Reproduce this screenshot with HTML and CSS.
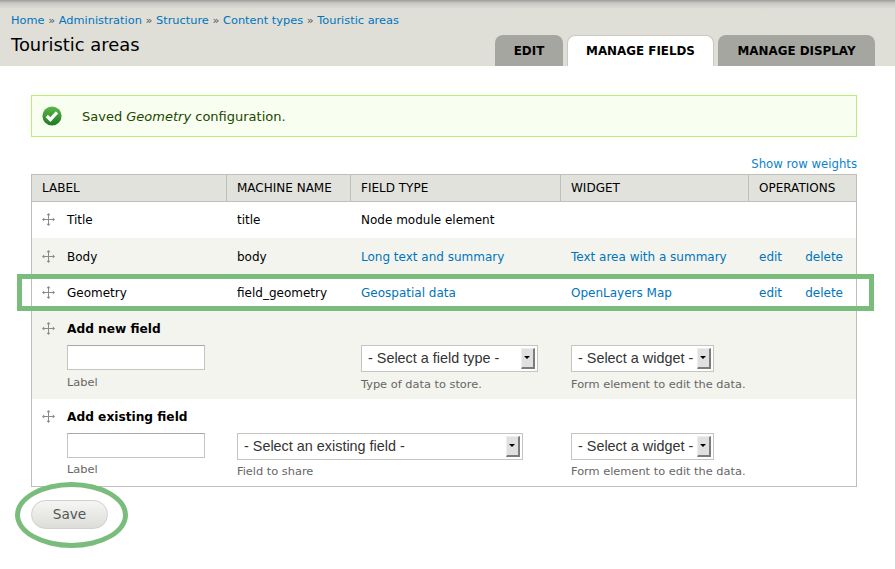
FILE: index.html
```html
<!DOCTYPE html>
<html>
<head>
  <meta charset="utf-8"/>
  <title>Touristic areas</title>
  <link rel="stylesheet" href="styles.css">
</head>
<body>
  <svg width="0" height="0" class="defs">
    <symbol id="handle" viewBox="0 0 13 13">
      <path d="M6.5 1v11M1 6.5h11" stroke="#8a8a86" stroke-width="1" fill="none"/>
      <path d="M6.5 0l2 2.2h-4zM6.5 13l2-2.2h-4zM0 6.5l2.2-2v4zM13 6.5l-2.2-2v4z" fill="#8a8a86"/>
    </symbol>
  </svg>

  <header class="header">
    <div class="breadcrumb">
      <a href="#">Home</a> » <a href="#">Administration</a> » <a href="#">Structure</a> » <a href="#">Content types</a> » <a href="#">Touristic areas</a>
    </div>
    <div class="header-row">
      <h1>Touristic areas</h1>
      <ul class="tabs">
        <li class="tab tab-edit">EDIT</li>
        <li class="tab tab-active">MANAGE FIELDS</li>
        <li class="tab tab-display">MANAGE DISPLAY</li>
      </ul>
    </div>
  </header>

  <main class="content">
    <div class="message">
      <svg class="check" width="20" height="20" viewBox="0 0 20 20">
        <defs>
          <linearGradient id="checkbg" x1="0" y1="0" x2="0" y2="1">
            <stop offset="0" stop-color="#5cb84a"/>
            <stop offset="1" stop-color="#1c7a22"/>
          </linearGradient>
        </defs>
        <circle cx="10" cy="10" r="9.6" fill="url(#checkbg)"/>
        <path d="M4.8 10l3.6 3.6 6.6-7.2" stroke="#fff" stroke-width="3.2" fill="none"/>
      </svg>
      <span>Saved <em>Geometry</em> configuration.</span>
    </div>

    <div class="weights"><a href="#">Show row weights</a></div>

    <table class="fields">
      <thead>
        <tr>
          <th class="col-label">LABEL</th>
          <th class="col-machine">MACHINE NAME</th>
          <th class="col-type">FIELD TYPE</th>
          <th class="col-widget">WIDGET</th>
          <th>OPERATIONS</th>
        </tr>
      </thead>
      <tbody>
        <tr class="row-a">
          <td><div class="drag"><svg class="grip"><use href="#handle"/></svg>Title</div></td>
          <td>title</td>
          <td>Node module element</td>
          <td></td>
          <td></td>
        </tr>
        <tr class="row-b">
          <td><div class="drag"><svg class="grip"><use href="#handle"/></svg>Body</div></td>
          <td>body</td>
          <td><a href="#">Long text and summary</a></td>
          <td><a href="#">Text area with a summary</a></td>
          <td><div class="ops"><a href="#">edit</a><a href="#">delete</a></div></td>
        </tr>
        <tr class="row-a">
          <td><div class="drag"><svg class="grip"><use href="#handle"/></svg>Geometry</div></td>
          <td>field_geometry</td>
          <td><a href="#">Geospatial data</a></td>
          <td><a href="#">OpenLayers Map</a></td>
          <td><div class="ops"><a href="#">edit</a><a href="#">delete</a></div></td>
        </tr>
        <tr class="row-b row-add">
          <td>
            <div class="drag"><svg class="grip"><use href="#handle"/></svg><strong>Add new field</strong></div>
            <input class="text-input" type="text">
            <div class="hint">Label</div>
          </td>
          <td></td>
          <td>
            <div class="fake-select select-type">- Select a field type -<i class="arrow"></i></div>
            <div class="hint">Type of data to store.</div>
          </td>
          <td colspan="2">
            <div class="fake-select select-widget">- Select a widget -<i class="arrow"></i></div>
            <div class="hint">Form element to edit the data.</div>
          </td>
        </tr>
        <tr class="row-a row-add">
          <td>
            <div class="drag"><svg class="grip"><use href="#handle"/></svg><strong>Add existing field</strong></div>
            <input class="text-input" type="text">
            <div class="hint">Label</div>
          </td>
          <td colspan="2">
            <div class="fake-select select-existing">- Select an existing field -<i class="arrow"></i></div>
            <div class="hint">Field to share</div>
          </td>
          <td colspan="2">
            <div class="fake-select select-widget">- Select a widget -<i class="arrow"></i></div>
            <div class="hint">Form element to edit the data.</div>
          </td>
        </tr>
      </tbody>
    </table>

    <button class="save" type="button">Save</button>
  </main>

  <!-- green annotations drawn on top of the screenshot -->
  <div class="mark-row"></div>
  <div class="mark-save"></div>
</body>
</html>
```

FILE: styles.css
```css
body {
  margin: 0;
  background: #fff;
  color: #000;
  font-family: "DejaVu Sans", sans-serif;
  font-size: 12px;
  position: relative;
  height: 569px;
  overflow: hidden;
}
a {
  color: #0074bd;
  text-decoration: none;
}
.defs {
  position: absolute;
}
.header {
  height: 66px;
  box-sizing: border-box;
  padding: 13px 20px 0 11px;
  background: linear-gradient(#9b9b97 0, #c8c8c2 3px, #dfdfd8 9px);
}
.breadcrumb {
  font-size: 11.375px;
  line-height: 14px;
  color: #555;
}
.header-row {
  display: flex;
  justify-content: space-between;
  height: 39px;
}
h1 {
  margin: 7px 0 0;
  font-size: 17.9px;
  font-weight: normal;
  line-height: 22px;
}
.tabs {
  display: flex;
  gap: 4px;
  list-style: none;
  margin: 8px 0 0;
  padding: 0;
}
.tab {
  box-sizing: border-box;
  height: 31px;
  line-height: 33px;
  text-align: center;
  font-size: 11.9px;
  font-weight: bold;
  background: #a6a6a0;
  border-radius: 8px 8px 0 0;
}
.tab-edit { width: 68px; }
.tab-active {
  width: 147px;
  background: #fff;
  border: 1px solid #c9c9c3;
  border-bottom: 0;
  line-height: 31px;
}
.tab-display { width: 157px; }
.content {
  padding: 29px 38px 0 31px;
}
.message {
  display: flex;
  align-items: center;
  gap: 20px;
  height: 42px;
  box-sizing: border-box;
  padding-left: 10px;
  background: #f8fff0;
  border: 1px solid #bbee77;
  color: #234600;
  font-size: 13px;
}
.weights {
  margin-top: 19px;
  height: 16px;
  line-height: 16px;
  text-align: right;
  font-size: 11.7px;
}
.weights a {
  color: #0b83cf;
}
.fields {
  width: 826px;
  margin-top: 2px;
  border-collapse: collapse;
  table-layout: fixed;
  border: 1px solid #bebfb9;
}
th {
  height: 27px;
  padding: 0 10px;
  box-sizing: border-box;
  background: #e1e2dc;
  border: 1px solid #bebfb9;
  text-align: left;
  font-size: 12px;
  font-weight: normal;
}
.col-label { width: 195px; }
.col-machine { width: 124px; }
.col-type { width: 210px; }
.col-widget { width: 188px; }
td {
  padding: 0 10px;
  vertical-align: middle;
  font-size: 12px;
}
td + td {
  padding-left: 10.5px;
}
.row-a { background: #fff; }
.row-b { background: #f3f4ee; }
.row-b td {
  padding-top: 1px;
}
tbody tr:nth-child(1) { height: 36px; }
tbody tr:nth-child(2) { height: 37px; }
tbody tr:nth-child(3) { height: 36px; }
tbody tr:nth-child(4) { height: 88px; }
tbody tr:nth-child(5) { height: 88px; }
.drag {
  display: flex;
  align-items: center;
}
.grip {
  width: 13px;
  height: 13px;
  margin-right: 12px;
  flex: none;
}
.ops {
  display: flex;
  justify-content: space-between;
  padding-right: 3px;
}
.row-add td {
  vertical-align: top;
  padding-top: 11px;
}
.row-add strong {
  font-size: 12.2px;
}
.text-input {
  display: block;
  box-sizing: border-box;
  width: 138px;
  height: 25px;
  margin: 9px 0 0 25px;
  padding: 0;
  background: #fff;
  border: 1px solid #c4c4c0;
  border-top-color: #a8a8a4;
}
.row-add td + td {
  padding-top: 34px;
}
.fake-select {
  position: relative;
  box-sizing: border-box;
  height: 27px;
  padding-left: 6px;
  line-height: 25px;
  background: #fff;
  border: 1px solid #c4c4c0;
  color: #333;
  font-family: "Liberation Sans", sans-serif;
  font-size: 14.4px;
}
.select-type { width: 177px; }
.select-widget { width: 143px; }
.select-existing { width: 286px; }
.arrow {
  position: absolute;
  right: 2px;
  top: 2px;
  width: 14px;
  height: 21px;
  box-sizing: border-box;
  background: #e0e0e0;
  border: solid;
  border-width: 1px 2px 2px 1px;
  border-color: #eee #7c7c7c #7c7c7c #eee;
}
.arrow::after {
  content: "";
  position: absolute;
  left: 2px;
  top: 7px;
  border: 3px solid transparent;
  border-top: 3px solid #000;
  border-bottom: 0;
}
.hint {
  margin-top: 5px;
  font-size: 11.375px;
  line-height: 13px;
  color: #666;
}
.row-b .hint {
  margin-top: 6px;
}
td:first-child .hint {
  margin-left: 25px;
}
.save {
  display: block;
  box-sizing: border-box;
  width: 77px;
  height: 29px;
  margin-top: 13px;
  padding: 0 0 2px;
  background: linear-gradient(#f6f6f4, #dcdcd8);
  border: 1px solid #d0d0cc;
  border-radius: 15px;
  color: #555;
  font-family: "DejaVu Sans", sans-serif;
  font-size: 13.7px;
}
.mark-row {
  position: absolute;
  left: 17px;
  top: 274px;
  width: 857px;
  height: 37px;
  box-sizing: border-box;
  border: 5px solid #7abc7c;
}
.mark-save {
  position: absolute;
  left: 15px;
  top: 482px;
  width: 113px;
  height: 66px;
  box-sizing: border-box;
  border: 5px solid #7abc7c;
  border-radius: 50%;
}
```
